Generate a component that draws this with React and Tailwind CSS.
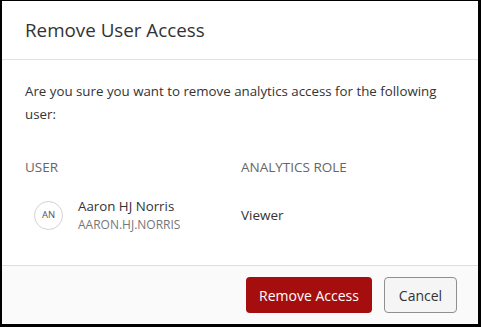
export default function App() {
  return (
    <div
      className="w-[481px] h-[327px] bg-black pl-[2px] pt-[1px] pr-[3px] pb-[3px]"
      style={{ fontFamily: '"Open Sans", "Noto Sans", sans-serif' }}
    >
      <div className="flex h-full flex-col bg-white text-[#333]">
        <div className="flex h-[59px] items-center border-b border-[#e1e1e1] px-[23px]">
          <h1 className="text-[18.8px] leading-none text-[#333]">Remove User Access</h1>
        </div>
        <div className="flex-1 px-[23px] pt-[20px]">
          <p className="text-[13.3px] leading-[23px] text-[#333]">
            Are you sure you want to remove analytics access for the following user:
          </p>
          <div className="mt-[31px] grid grid-cols-[216px_1fr] text-[13.5px] uppercase text-[#666]">
            <div>User</div>
            <div>Analytics Role</div>
          </div>
          <div className="mt-[20px] grid grid-cols-[216px_1fr] items-center">
            <div className="flex items-center gap-[15px]">
              <div className="ml-[9px] flex h-[29px] w-[29px] items-center justify-center rounded-full border border-[#d2d2d2] text-[9.5px] text-[#555]">
                AN
              </div>
              <div className="flex flex-col">
                <span className="text-[13.3px] leading-[19px] text-[#333]">Aaron HJ Norris</span>
                <span className="text-[12px] leading-[17px] text-[#777]">AARON.HJ.NORRIS</span>
              </div>
            </div>
            <div className="text-[13.5px] text-[#333]">Viewer</div>
          </div>
        </div>
        <div className="flex h-[59px] items-center justify-end gap-[12px] border-t border-[#dedede] bg-[#fafafa] pr-[21px]">
          <button className="h-[36px] w-[126px] rounded-[4px] bg-[#a50e0e] text-[14px] text-white">
            Remove Access
          </button>
          <button className="h-[36px] w-[73px] rounded-[4px] border border-[#8f8f8f] bg-[#f5f5f5] text-[14px] text-[#333]">
            Cancel
          </button>
        </div>
      </div>
    </div>
  );
}
